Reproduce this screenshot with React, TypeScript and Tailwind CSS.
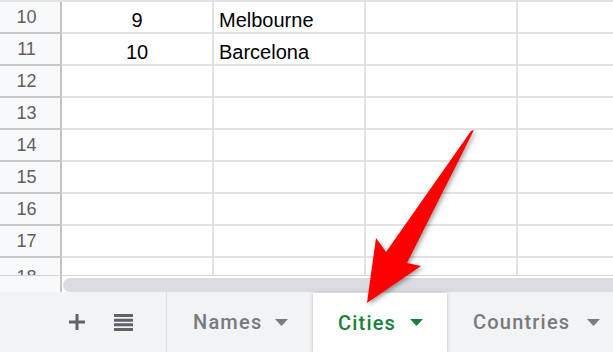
import React from "react"

const rows = [
  { n: 10, a: "9", b: "Melbourne" },
  { n: 11, a: "10", b: "Barcelona" },
  { n: 12, a: "", b: "" },
  { n: 13, a: "", b: "" },
  { n: 14, a: "", b: "" },
  { n: 15, a: "", b: "" },
  { n: 16, a: "", b: "" },
  { n: 17, a: "", b: "" },
]

function Caret({ className }: { className: string }) {
  return (
    <svg width="13" height="7" viewBox="0 0 13 7" className={className}>
      <path d="M0 0h13L6.5 7z" fill="currentColor" />
    </svg>
  )
}

export default function App() {
  return (
    <div className="relative w-[613px] h-[352px] overflow-hidden bg-white font-['Liberation_Sans',Arial,sans-serif]">
      {/* Grid */}
      <div className="border-t-2 border-[#e2e2e2]">
        {rows.map((r) => (
          <div key={r.n} className="grid grid-cols-[62px_152px_152px_152px_1fr] h-[32px]">
            <div className="flex items-center justify-center pr-[7px] bg-[#f8f9fa] border-r-2 border-b-2 border-r-[#c4c4c4] border-b-[#c8c8c8] text-[18px] text-[#5f5f5f]">
              {r.n}
            </div>
            <div className="flex items-end justify-center border-r-2 border-b-2 border-[#e2e2e2] text-[20px] leading-[23px] text-black">
              {r.a}
            </div>
            <div className="flex items-end pl-[5px] border-r-2 border-b-2 border-[#e2e2e2] text-[20px] leading-[23px] text-black">
              {r.b}
            </div>
            <div className="border-r-2 border-b-2 border-[#e2e2e2]" />
            <div className="border-b-2 border-[#e2e2e2]" />
          </div>
        ))}
        {/* partial row 18 */}
        <div className="grid grid-cols-[62px_152px_152px_152px_1fr] h-[17px] overflow-hidden">
          <div className="flex justify-center pr-[7px] pt-[6px] bg-[#f8f9fa] border-r-2 border-[#c4c4c4] text-[18px] text-[#5f5f5f]">
            18
          </div>
          <div className="border-r-2 border-[#e2e2e2]" />
          <div className="border-r-2 border-[#e2e2e2]" />
          <div className="border-r-2 border-[#e2e2e2]" />
          <div />
        </div>
      </div>

      {/* Horizontal scrollbar */}
      <div className="flex h-[17px] border-t border-[#d4d4d4]">
        <div className="w-[62px] bg-[#f8f9fa] border-r-2 border-[#c4c4c4]" />
        <div className="flex-1 pl-px pt-[2px]">
          <div className="h-[14px] rounded-l-full bg-[#dadce0]" />
        </div>
      </div>

      {/* Sheet tabs */}
      <div className="flex h-[60px] bg-[#f1f3f4] font-['Roboto',sans-serif] font-medium text-[20px] tracking-[1.2px]">
        <div className="flex items-center w-[166px] shrink-0 pl-[69px] gap-[29px] text-[#5f6368]">
          <svg width="16" height="16" viewBox="0 0 16 16">
            <path d="M8 0v16M0 8h16" stroke="currentColor" strokeWidth="3" />
          </svg>
          <svg width="19" height="17" viewBox="0 0 19 17">
            <path d="M0 1.5h19M0 6.2h19M0 10.8h19M0 15.5h19" stroke="currentColor" strokeWidth="3" />
          </svg>
        </div>
        <div className="flex items-center justify-between w-[147px] shrink-0 pl-[26px] pr-[25px] border-l border-[#dadce0] text-[#777a7e]">
          <span>Names</span>
          <Caret className="text-[#777a7e]" />
        </div>
        <div className="flex items-center justify-between w-[134px] shrink-0 mt-px pl-[25px] pr-[24px] bg-white shadow-[0_0_4px_rgba(60,64,67,0.3)] text-[#188038]">
          <span>Cities</span>
          <Caret className="text-[#188038]" />
        </div>
        <div className="flex items-center justify-between flex-1 pl-[26px] pr-[13px] text-[#777a7e]">
          <span>Countries</span>
          <Caret className="text-[#777a7e]" />
        </div>
      </div>

      {/* Red arrow */}
      <svg
        className="absolute left-0 top-0 pointer-events-none drop-shadow-[2px_2px_2px_rgba(0,0,0,0.35)]"
        width="613"
        height="352"
        viewBox="0 0 613 352"
      >
        <polygon
          points="367,303 376,238 386,252 471,131 474,130 407,263 421,266"
          fill="#ff0000"
        />
      </svg>
    </div>
  )
}
